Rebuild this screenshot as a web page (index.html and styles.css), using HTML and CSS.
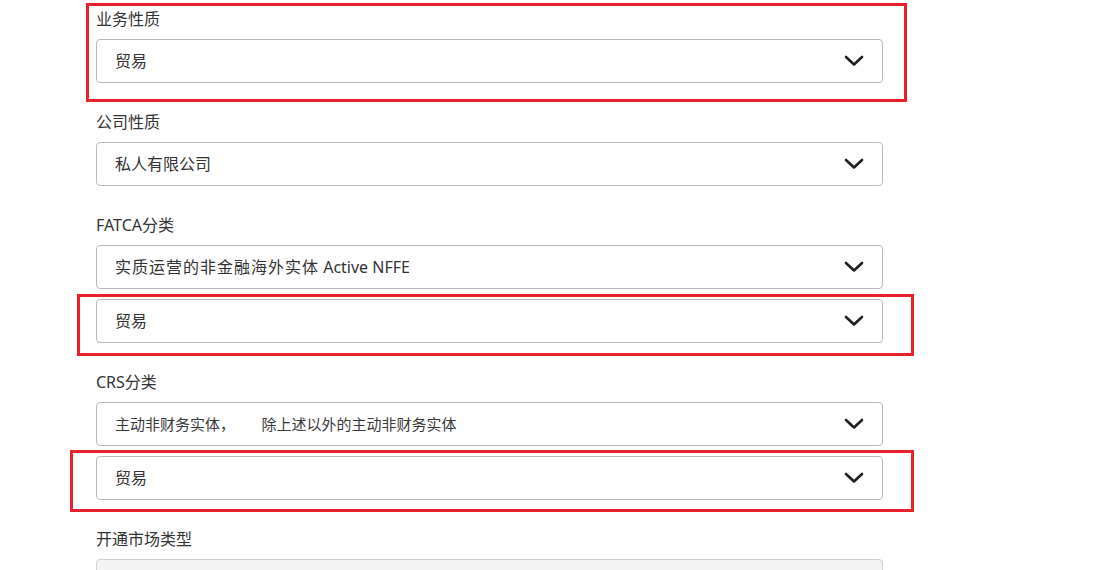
FILE: index.html
```html
<!DOCTYPE html>
<html lang="zh">
<head>
<meta charset="utf-8">
<link rel="stylesheet" href="styles.css">
</head>
<body>
<div class="page">
  <form class="form">
    <div class="field">
      <div class="label">业务性质</div>
      <div class="select"><span>贸易</span><svg class="chev" viewBox="0 0 20 12"><path d="M2 2 L10 9.5 L18 2"/></svg></div>
    </div>
    <div class="field">
      <div class="label">公司性质</div>
      <div class="select"><span>私人有限公司</span><svg class="chev" viewBox="0 0 20 12"><path d="M2 2 L10 9.5 L18 2"/></svg></div>
    </div>
    <div class="field">
      <div class="label">FATCA分类</div>
      <div class="select"><span><span class="wide">实质运营的非金融海外实体</span> Active NFFE</span><svg class="chev" viewBox="0 0 20 12"><path d="M2 2 L10 9.5 L18 2"/></svg></div>
      <div class="select"><span>贸易</span><svg class="chev" viewBox="0 0 20 12"><path d="M2 2 L10 9.5 L18 2"/></svg></div>
    </div>
    <div class="field">
      <div class="label">CRS分类</div>
      <div class="select"><span class="small">主动非财务实体，　　&nbsp;除上述以外的主动非财务实体</span><svg class="chev" viewBox="0 0 20 12"><path d="M2 2 L10 9.5 L18 2"/></svg></div>
      <div class="select"><span>贸易</span><svg class="chev" viewBox="0 0 20 12"><path d="M2 2 L10 9.5 L18 2"/></svg></div>
    </div>
    <div class="field">
      <div class="label">开通市场类型</div>
      <div class="select disabled"></div>
    </div>
  </form>
  <div class="mark mark1"></div>
  <div class="mark mark2"></div>
  <div class="mark mark3"></div>
</div>
</body>
</html>
```
FILE: styles.css
```css
html, body {
  margin: 0;
  padding: 0;
  background: #fff;
}
body {
  width: 1116px;
  height: 570px;
  overflow: hidden;
  font-family: "Noto Sans", "Noto Sans CJK SC", sans-serif;
  font-size: 16px;
  color: #333;
}
.page {
  position: relative;
  height: 570px;
}
.form {
  display: flex;
  flex-direction: column;
  gap: 29px;
  padding: 9px 0 0 96px;
  width: 787px;
}
.field {
  display: flex;
  flex-direction: column;
  gap: 10px;
}
.label {
  height: 20px;
  line-height: 20px;
  color: #333;
}
.select {
  box-sizing: border-box;
  height: 44px;
  border: 1px solid #b9b9b9;
  border-radius: 4px;
  display: flex;
  align-items: center;
  justify-content: space-between;
  padding: 0 18px 0 18px;
  color: #333;
}
.select span {
  line-height: 20px;
}
.select span.wide {
  letter-spacing: 1px;
}
.select span.small {
  font-size: 15px;
  color: #3a3a3a;
}
.chev {
  width: 20px;
  height: 12px;
}
.chev path {
  fill: none;
  stroke: #1f1f1f;
  stroke-width: 2.6;
  stroke-linecap: round;
  stroke-linejoin: round;
}
.select.disabled {
  background: #f4f4f4;
  border-color: #d0d0d0;
}
.mark {
  position: absolute;
  box-sizing: border-box;
  border: 3px solid #e9202b;
}
.mark1 {
  left: 86px;
  top: 3px;
  width: 821px;
  height: 99px;
}
.mark2 {
  left: 77px;
  top: 294px;
  width: 837px;
  height: 62px;
}
.mark3 {
  left: 70px;
  top: 450px;
  width: 844px;
  height: 62px;
}
```
